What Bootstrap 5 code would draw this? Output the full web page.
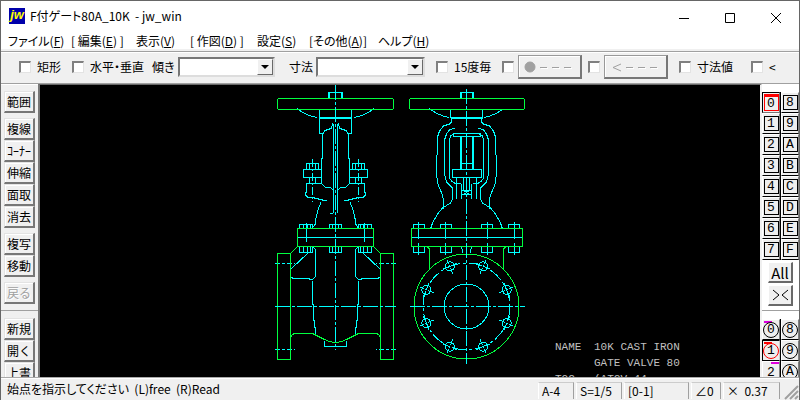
<!DOCTYPE html>
<html lang="ja">
<head>
<meta charset="utf-8">
<meta name="viewport" content="width=device-width, initial-scale=1">
<title>F付ゲート80A_10K - jw_win</title>
<link href="https://cdn.jsdelivr.net/npm/bootstrap@5.3.0/dist/css/bootstrap.min.css" rel="stylesheet">
<style>
:root{--face:#f0f0f0;--shade:#a0a0a0;--dark:#696969;--ui:"Noto Sans CJK JP",sans-serif}
body{font:12px/16px var(--ui);color:#000;background:var(--face)}
button{font:inherit;color:inherit;padding:0}
.app{border:1px solid #666;border-bottom:0}
.titlebar{height:30px;padding-left:8px}
.logo{width:16px;height:16px;background:#00a;color:#ff0;font:italic bold 13px/14px "Liberation Sans",sans-serif;text-align:center}
.caption{font-feature-settings:"palt";padding-left:5px}
.winbtn{width:46px;height:29px;border:0;background:none}
.menus{height:18px;padding-left:7px;display:grid;grid-template-columns:63px 65px 54px 67px 52px 69px 1fr}
.menus a{color:#000;text-decoration:none;white-space:nowrap;font-feature-settings:"palt";font-size:12px;line-height:20px}
.tools{background:var(--face);height:35px;border-top:2px solid #f0f0f0;border-bottom:1px solid var(--shade);padding-left:18px;display:grid;grid-template-columns:53px 80px 137px 147px 66px 86px 91px 72px 1fr;box-shadow:inset 0 1px #a0a0a0,inset 0 2px #fff;align-items:center}
.tools label{font-feature-settings:"palt";white-space:nowrap}
.tick{appearance:none;width:12px;height:12px;flex:none;background:#fff;border:2px solid #808080;border-right:1px solid #e3e3e3;border-bottom:1px solid #e3e3e3;margin:0 6px 0 0}
.combo{height:20px;background:#fff;border:2px solid #777;border-right-color:#ddd;border-bottom-color:#ddd;margin-left:3px}
.combo select{appearance:none;border:0;background:#fff;min-width:0;font:inherit;padding:0 2px}
.combo span{width:16px;flex:none;background:var(--face);border:1px solid #fff;border-right-color:var(--dark);border-bottom-color:var(--dark)}
.w-slope{width:97px}.w-size{width:109px}
.raised{background:var(--face);border:1px solid #fff;border-right:2px solid var(--dark);border-bottom:2px solid var(--dark)}
.raised:disabled{color:#a0a0a0;text-shadow:1px 1px #fff}
.linebtn{width:64px;height:24px;border:1px solid #999;border-right:2px solid #777;border-bottom:2px solid #777;box-shadow:inset 1px 1px #fff;background:var(--face)}
.leftbar{width:37px;background:var(--face);padding:6px 3px 0;border-top:1px solid #fff;gap:5px}
.leftbar button{width:31px;height:22px;line-height:18px;font-size:12px;white-space:nowrap;border-color:#e3e3e3 #777 #777 #e3e3e3;box-shadow:inset 1px 1px #fff}
.leftbar hr,.rightbar hr{margin:1px -3px 2px;height:1px;background:var(--shade);border:0;opacity:1;flex:none}
.drawing{background:#000;border-left:2px solid #777;border-top:1px solid var(--dark);border-right:2px solid #f0f0f0}
.drawing svg{shape-rendering:crispEdges;fill:none;stroke-width:1}
.cy{stroke:#0ff}.gr{stroke:#00ff40}
.note{fill:#c0c0c0;font:11px "Liberation Mono",monospace}
.rightbar{width:37px;background:#fff;padding-top:8px}
.layers{display:grid;grid-template-columns:1fr 1fr;column-gap:1px;background:#000;flex:none}
.layers button{height:21px;border:1px solid #fff;border-bottom:1px solid #000;border-right:1px solid #808080;background:#eee;display:flex;align-items:center;justify-content:center;font:13px/13px "Liberation Mono",monospace;overflow:hidden}
.sq{width:15px;height:15px;border:1px solid #000;flex:none}
.layers .active-sq{border-color:#000 #777 #777 #000;background:#f0f0f0}
.active-sq .sq{border:1px solid red;border-top:3px solid red;height:17px}
.ring{width:16px;height:16px;border:1px solid #000;border-radius:50%;line-height:14px;flex:none}
.grp button{flex-direction:column;justify-content:flex-end;padding-bottom:1px}
.flag{width:8px;height:2px;background:#d0d;flex:none;align-self:flex-start;margin:0 0 -1px 1px}
.flag.end{align-self:flex-end;margin-bottom:2px}
.grp .plain{justify-content:flex-start}
.grp .active-ring{border-color:#000 #ccc #000 #000}
.active-ring .ring{border-color:red}.active-ring .flag{background:red}
.rightbar .cmd{width:25px;height:21px;flex:none;margin:2px auto 0;line-height:17px;font-size:15px}
.rightbar hr{margin:4px 0 8px}
.status{height:22px;border-top:1px solid #fff;background:var(--face);box-shadow:0 -1px #aaa;position:relative}
.status .msg{padding-left:6px;line-height:19px;font-feature-settings:"palt";white-space:nowrap}
.pane{margin:3px 2px 0 0;height:17px;border-right:1px solid var(--shade);border-top:1px solid #ccc;border-left:1px solid #fff;padding-left:3px;line-height:15px;white-space:nowrap;flex:none}
.p1{width:36px}.p2{width:46px}.p3{width:65px}.p4{width:30px}.p5{width:57px}
</style>
</head>
<body>
<div class="app vh-100 d-flex flex-column overflow-hidden bg-white">
<header class="titlebar d-flex align-items-center flex-shrink-0">
<span class="logo">jw</span><span class="caption flex-fill">F付ゲート80A_10K&nbsp; - jw_win</span>
<button class="winbtn" aria-label="最小化"><svg width="12" height="12" stroke="#000"><path d="M1 6.5h10"/></svg></button>
<button class="winbtn" aria-label="最大化"><svg width="12" height="12" stroke="#000" fill="none"><path d="M1.5 1.5h9v9h-9z"/></svg></button>
<button class="winbtn" aria-label="閉じる"><svg width="12" height="12" stroke="#000"><path d="M1 1l10 10M11 1L1 11"/></svg></button>
</header>
<nav class="menus flex-shrink-0">
<a href="#">ファイル(<u>F</u>)</a><a href="#">[ 編集(<u>E</u>) ]</a><a href="#">表示(<u>V</u>)</a><a href="#">[ 作図(<u>D</u>) ]</a><a href="#">設定(<u>S</u>)</a><a href="#">[その他(<u>A</u>)]</a><a href="#">ヘルプ(<u>H</u>)</a>
</nav>
<form class="tools flex-shrink-0">
<div class="d-flex align-items-center"><input type="checkbox" class="tick" id="c1"><label for="c1">矩形</label></div>
<div class="d-flex align-items-center"><input type="checkbox" class="tick" id="c2"><label for="c2">水平・垂直</label></div>
<div class="d-flex align-items-center"><label for="s1">傾き</label><div class="combo d-flex w-slope"><select id="s1" class="flex-fill"><option></option></select><span class="d-flex align-items-center justify-content-center"><svg width="8" height="4"><path d="M0 0h8L4 4z"/></svg></span></div></div>
<div class="d-flex align-items-center"><label for="s2">寸法</label><div class="combo d-flex w-size"><select id="s2" class="flex-fill"><option></option></select><span class="d-flex align-items-center justify-content-center"><svg width="8" height="4"><path d="M0 0h8L4 4z"/></svg></span></div></div>
<div class="d-flex align-items-center"><input type="checkbox" class="tick" id="c3"><label for="c3">15度毎</label></div>
<div class="d-flex align-items-center"><input type="checkbox" class="tick me-1" id="c4" aria-label="端点"><button type="button" class="linebtn d-flex align-items-center justify-content-center" aria-label="点付き線"><svg width="54" height="14" stroke="#a0a0a0"><circle cx="7" cy="7" r="5" fill="#a0a0a0"/><path d="M17 7.5h7M29 7.5h7M41 7.5h7"/><path stroke="#fff" d="M18 8.5h7M30 8.5h7M42 8.5h7"/></svg></button></div>
<div class="d-flex align-items-center"><input type="checkbox" class="tick me-1" id="c5" aria-label="矢印"><button type="button" class="linebtn d-flex align-items-center justify-content-center" aria-label="矢印付き線"><svg width="54" height="14" stroke="#a0a0a0" fill="none"><path d="M12 4L4 7.500l8 3.500M17 7.500h7M29 7.500h7M41 7.500h7"/><path stroke="#fff" d="M18 8.500h7M30 8.500h7M42 8.500h7"/></svg></button></div>
<div class="d-flex align-items-center"><input type="checkbox" class="tick" id="c6"><label for="c6">寸法値</label></div>
<div class="d-flex align-items-center"><input type="checkbox" class="tick" id="c7"><label for="c7">&lt;</label></div>
</form>
<main class="d-flex flex-fill overflow-hidden">
<aside class="leftbar d-flex flex-column flex-shrink-0 overflow-hidden">
<div><button class="raised d-block">範囲</button></div>
<div><button class="raised d-block">複線</button><button class="raised d-block">ｺｰﾅｰ</button><button class="raised d-block">伸縮</button><button class="raised d-block">面取</button><button class="raised d-block">消去</button></div>
<div><button class="raised d-block">複写</button><button class="raised d-block">移動</button></div>
<div><button class="raised d-block" disabled>戻る</button></div>
<hr>
<div><button class="raised d-block">新規</button><button class="raised d-block">開く</button><button class="raised d-block">上書</button></div>
</aside>
<section class="drawing flex-fill overflow-hidden">
<svg class="d-block w-100 h-100" role="img" aria-label="ゲートバルブ図面"><defs>
<g id="sideHalf">
<g class="cy"><path d="M297.500 108.500Q304 115 317 117.500M319.500 110v23.500h3V158.500h-1V184M322 135.500l3-5 6-2 2-5M333.500 124v89M306.500 169v-5.500h12v5.500M309.500 164v5M315.500 164v5M303.500 169.500h18v8h-18zM309.500 178v5M315.500 178v5M306.500 183.500h15M306.500 183v9l-1 1v2l2 2 7 1 8 2 4 1M320.500 202v2l-2 4-2 8-1 5v3l-3 4M322 184l3 3h5l3 3"/>
<path stroke-dasharray="8 2 2 2" d="M312.500 159v43"/>
<path d="M299.500 228v-3.500h13v3.500M303.500 225v3M307.500 225v3M310.500 225v3M299.500 247v5.500h13V247M303.500 247v5M307.500 247v5M310.500 247v5M306.500 223v19M308 253l-17 16M290.500 275q0 3 3 3.500h14l4 1q4-1 4-5V252q0-4-3-5M312.500 281v22l1 3v14l1 1v6l1 1v6"/>
<path stroke-dasharray="5 2 3 2" d="M275 263.500h20M275 349.500h20"/></g>
<g class="gr"><path d="M297.500 246.500l-7 7M277.500 253.500h13v105.500h-13zM290.500 338q1-4 5-4.500h17l12 6q5 3 11 3"/></g></g>
<g id="frontHalf">
<g class="cy"><path d="M429.500 108.500Q437 115 449 117.500M450.500 110v8M451.500 118v4l-2 2-6 2-4 5-2 6v15l-1 6v14l1 11 2 5 3 7 1 5v9M454.500 128l-5 2-3 4-2 6v34l2 8 6 6v11l-2 4-8 5-5 6-5 9-2 6M453.500 134l-3 2-1 4v38l2 3 3 2h6M456.500 178v21M463.500 178v12M461.500 184v15"/>
<path d="M413.500 228v-3.500h11v3.500M440.500 228v-3.500h11v3.500M413.500 247v5.500h11V247M440.500 247v5.500h11V247M418.500 222v17M445.500 222v17M418.500 243v12M445.500 243v12M460.500 246l2 4v3"/></g>
<path class="gr" d="M427.500 247l2 2v20"/></g>
<g id="hole"><circle cx="466.500" cy="263" r="4.500"/><path d="M466.500 256v5M466.500 262v2M466.500 265v6M459 263h5M466 263h2M469 263h5"/></g>
</defs>
<g transform="translate(-40 -85)">
<use href="#sideHalf"/><use href="#sideHalf" transform="translate(671 0) scale(-1 1)"/>
<rect class="gr" x="277.500" y="98.500" width="116" height="11" rx="2"/>
<rect class="gr" x="297.500" y="228.500" width="76" height="18"/>
<g class="cy"><path d="M328.500 98v-5.500h14v5.500M329.500 93v5M341.500 93v5M319 117.500h33M319 118.500h33M298 237.500h75M329.500 228v-3.500h12v3.500M332.500 225v3M338.500 225v3M329.500 247v5.500h12V247M332.500 247v5M338.500 247v5M324.500 341v5.500h22V341M330 213.500h3"/>
<path stroke-dasharray="15 2 3 2" d="M335.500 85v265M275 306.500h121"/></g>
<use href="#frontHalf"/><use href="#frontHalf" transform="translate(933 0) scale(-1 1)"/>
<g class="gr"><rect x="409.500" y="98.500" width="115" height="11" rx="2"/><rect x="411.500" y="228.500" width="111" height="18"/><circle cx="466.500" cy="306.500" r="52.500"/></g>
<g class="cy"><path d="M460.500 98v-5.500h13v5.500M461.500 93v5M472.500 93v5M451 117.500h32M451 118.500h32M453.500 133.500h27v3h-27zM460.500 137v32M461.500 137v32M472.500 137v32M473.500 137v32M461 163.500h12M452.500 169.500h29v8h-29zM461.500 190.500h10M461.500 194.500h10M463 190l7 5M470 190l-7 5M412 237.500h110"/>
<circle cx="466.500" cy="306.500" r="22.500"/><circle cx="466.500" cy="306.500" r="43.500" stroke-dasharray="14 3 3 3"/>
<path stroke-dasharray="15 2 3 2" d="M466.500 89v275M410 306.500h115"/>
<use href="#hole" transform="rotate(22.500 466.500 306.500)"/><use href="#hole" transform="rotate(67.500 466.500 306.500)"/><use href="#hole" transform="rotate(112.500 466.500 306.500)"/><use href="#hole" transform="rotate(157.500 466.500 306.500)"/><use href="#hole" transform="rotate(202.500 466.500 306.500)"/><use href="#hole" transform="rotate(247.500 466.500 306.500)"/><use href="#hole" transform="rotate(292.500 466.500 306.500)"/><use href="#hole" transform="rotate(337.500 466.500 306.500)"/></g>
<g class="note"><text x="555" y="350">NAME</text><text x="594" y="350">10K CAST IRON</text><text x="594" y="366">GATE VALVE 80</text><text x="555" y="382">TOC</text><text x="594" y="382">(ATCV.44</text></g>
</g></svg>
</section>
<aside class="rightbar d-flex flex-column flex-shrink-0 overflow-hidden">
<div class="layers">
<button class="active-sq"><span class="sq">0</span></button><button><span class="sq">8</span></button>
<button><span class="sq">1</span></button><button><span class="sq">9</span></button>
<button><span class="sq">2</span></button><button><span class="sq">A</span></button>
<button><span class="sq">3</span></button><button><span class="sq">B</span></button>
<button><span class="sq">4</span></button><button><span class="sq">C</span></button>
<button><span class="sq">5</span></button><button><span class="sq">D</span></button>
<button><span class="sq">6</span></button><button><span class="sq">E</span></button>
<button><span class="sq">7</span></button><button><span class="sq">F</span></button>
</div>
<button class="raised cmd">All</button>
<button class="raised cmd d-flex align-items-center justify-content-center" aria-label="切替"><svg width="17" height="12" stroke="#000" fill="none"><path d="M1 1l6 5-6 5M16 1l-6 5 6 5"/></svg></button>
<hr>
<div class="layers grp">
<button><span class="flag"></span><span class="ring">0</span></button><button><span class="ring">8</span></button>
<button class="active-ring"><span class="flag"></span><span class="ring">1</span></button><button><span class="ring">9</span></button>
<button class="plain"><span class="flag end"></span><span>2</span></button><button><span class="ring">A</span></button>
</div>
</aside>
</main>
<footer class="status d-flex flex-shrink-0">
<span class="msg flex-fill">始点を指示してください&nbsp; (L)free&nbsp; (R)Read</span>
<span class="pane p1">A-4</span><span class="pane p2">S=1/5</span><span class="pane p3">[0-1]</span><span class="pane p4">∠0</span><span class="pane p5">×&nbsp; 0.37</span>
<svg class="align-self-end" width="17" height="17" stroke="#a0a0a0" stroke-width="2"><path d="M3 16L16 3M8 16l8-8M13 16l3-3"/></svg>
</footer>
</div>
<script src="https://cdn.jsdelivr.net/npm/bootstrap@5.3.0/dist/js/bootstrap.bundle.min.js"></script>
</body>
</html>
